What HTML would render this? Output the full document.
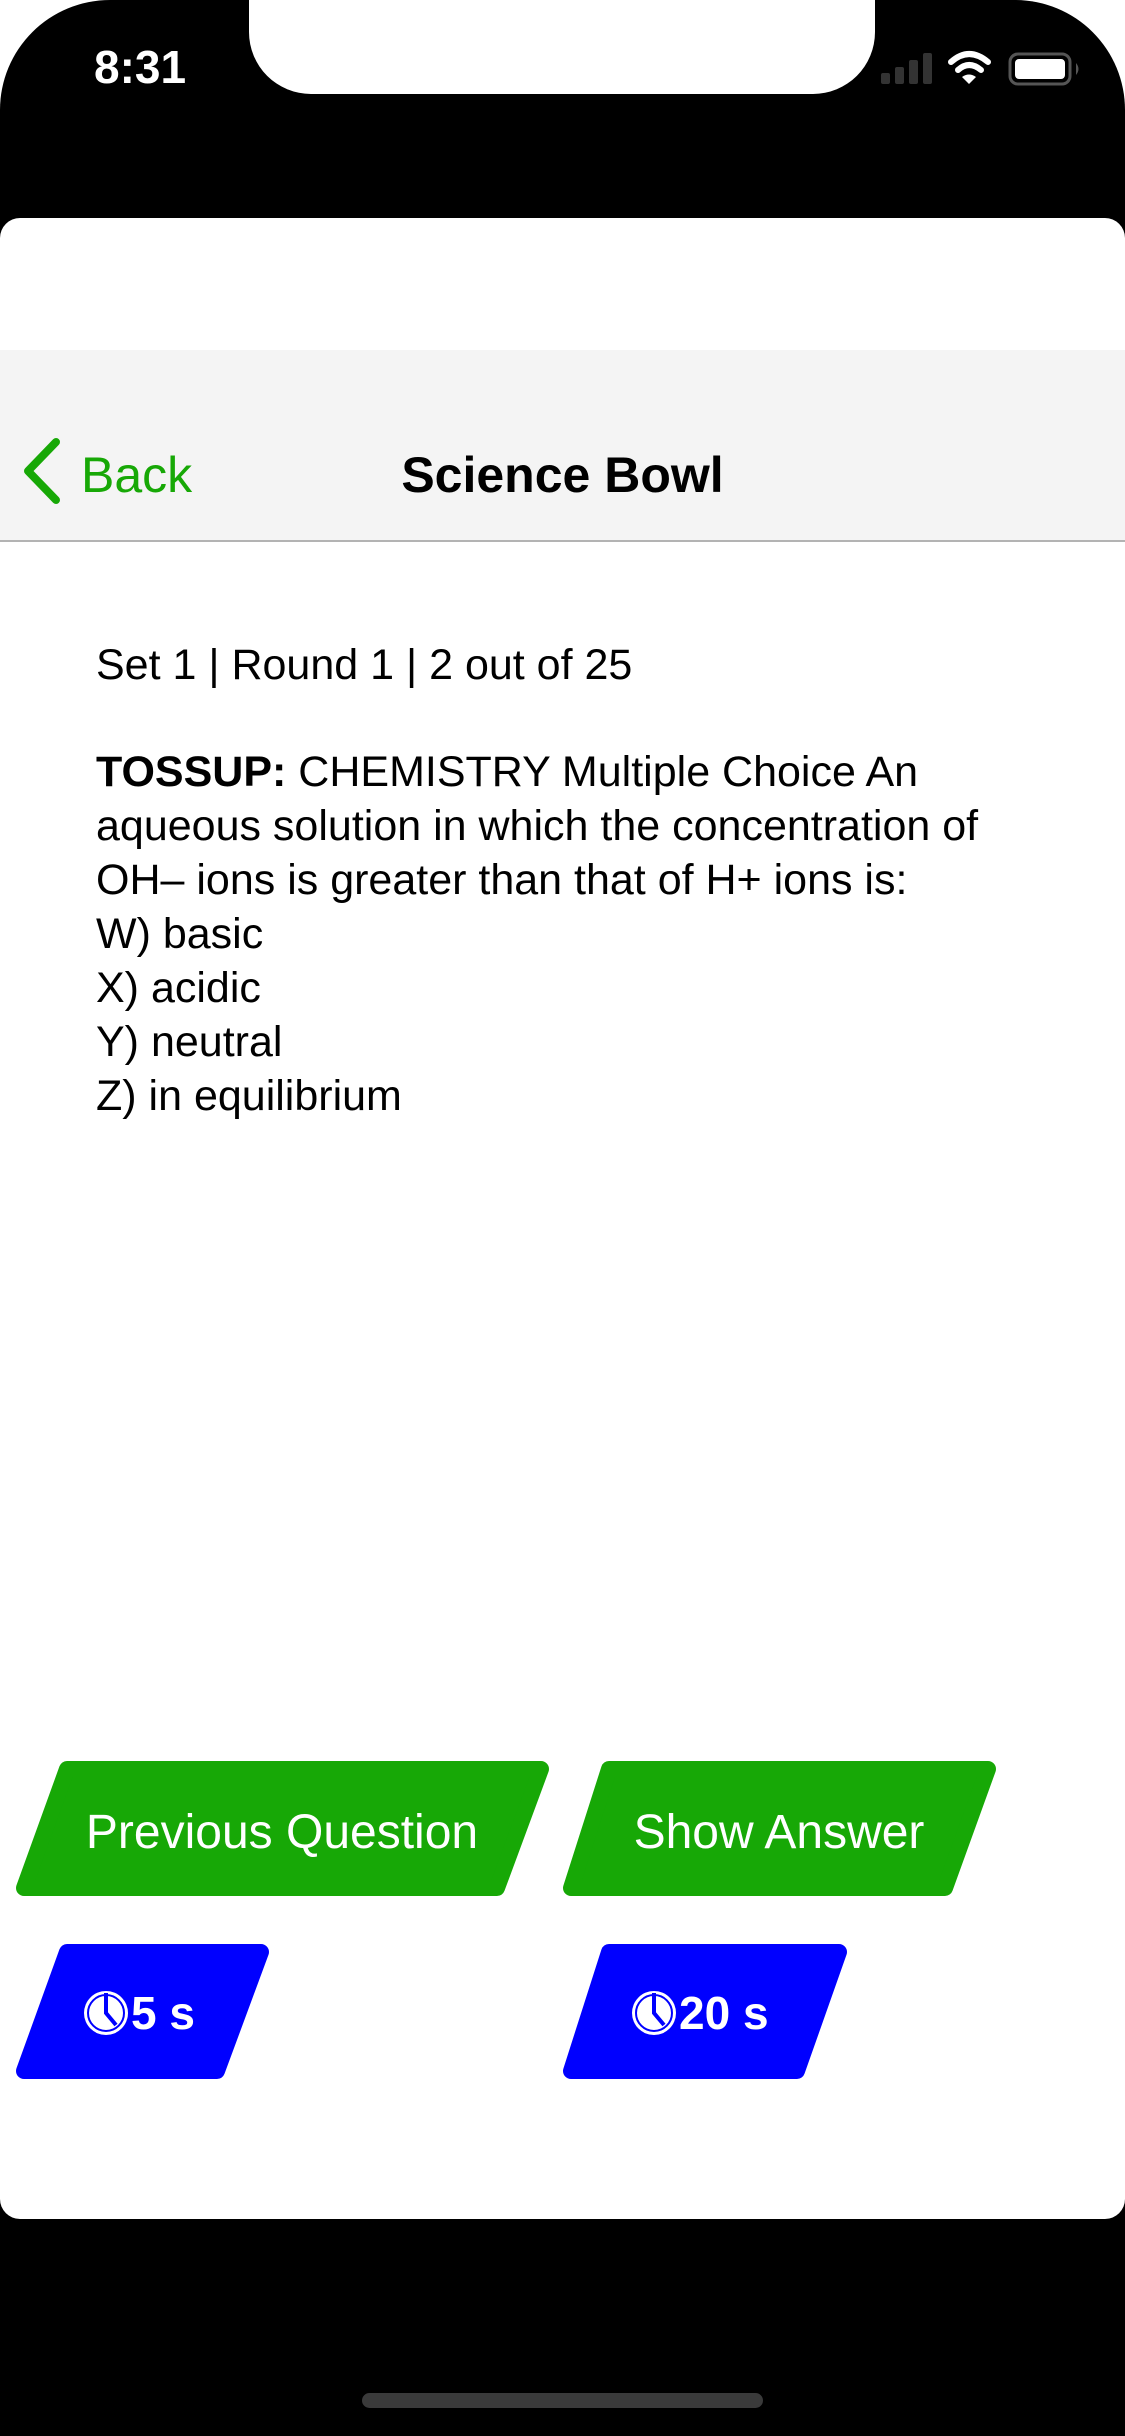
<!DOCTYPE html>
<html><head><meta charset="utf-8">
<style>
html,body{margin:0;padding:0;background:#fff;}
body{width:1125px;height:2436px;position:relative;overflow:hidden;font-family:"Liberation Sans",Arial,sans-serif;}
.phone{position:absolute;left:0;top:0;width:1125px;height:2436px;background:#000;border-radius:110px 110px 0 0;}
.notch{position:absolute;left:249px;top:0;width:626px;height:94px;background:#fff;border-radius:0 0 62px 62px;}
.card{position:absolute;left:0;top:218px;width:1125px;height:2001px;background:#fff;border-radius:20px;overflow:hidden;}
.nav{position:absolute;left:0;top:132px;width:1125px;height:190px;background:#f4f4f4;border-bottom:2px solid #b3b3b3;}
.time{position:absolute;left:94px;top:40px;color:#fff;font-size:46px;font-weight:600;}
.title{position:absolute;left:0;width:1125px;text-align:center;top:96px;font-size:50px;font-weight:bold;color:#000;}
.back{position:absolute;left:81px;top:96px;font-size:50px;color:#17a806;}
.txt{position:absolute;left:96px;font-size:43px;line-height:54px;color:#000;}
.home{position:absolute;left:362px;top:2393px;width:401px;height:15px;border-radius:8px;background:#3a3a3a;}
</style></head><body>
<div class="phone"></div>
<div class="notch"></div>
<div class="time">8:31</div>
<svg style="position:absolute;left:0;top:0" width="1125" height="120">
 <g fill="#333"><rect x="881" y="73" width="9" height="11" rx="2"/><rect x="895" y="67" width="9" height="17" rx="2"/><rect x="909" y="60" width="9" height="24" rx="2"/><rect x="923" y="53" width="9" height="31" rx="2"/></g>
 <g fill="none" stroke="#fff" stroke-width="6" stroke-linecap="round"><path d="M951 62 Q969 46 988 62"/><path d="M958 70 Q969 60 981 70"/></g>
 <path d="M962 77 L969 84 L976 77 Q969 72 962 77Z" fill="#fff"/>
 <rect x="1010" y="54" width="60" height="30" rx="8" fill="none" stroke="#555" stroke-width="3"/>
 <rect x="1015" y="59" width="50" height="20" rx="4" fill="#fff"/>
 <path d="M1076 63 Q1081 69 1076 75Z" fill="#555"/>
</svg>
<div class="card">
 <div class="nav">
  <svg style="position:absolute;left:18px;top:86px" width="50" height="70"><path d="M38 6 L10 35 L38 64" fill="none" stroke="#17a806" stroke-width="8" stroke-linecap="round" stroke-linejoin="round"/></svg>
  <div class="back">Back</div>
  <div class="title">Science Bowl</div>
 </div>
 <div class="txt" style="top:420px">Set 1 | Round 1 | 2 out of 25</div>
 <div class="txt" style="top:527px"><b>TOSSUP:</b> CHEMISTRY Multiple Choice An<br>aqueous solution in which the concentration of<br>OH– ions is greater than that of H+ ions is:<br>W) basic<br>X) acidic<br>Y) neutral<br>Z) in equilibrium</div>
</div>
<svg style="position:absolute;left:0;top:0" width="1125" height="2436">
 <g stroke-linejoin="round" stroke-width="16">
  <polygon points="67,1769 541,1769 497,1888 24,1888" fill="#17a806" stroke="#17a806"/>
  <polygon points="609,1769 988,1769 945,1888 571,1888" fill="#17a806" stroke="#17a806"/>
  <polygon points="67,1952 261,1952 217,2071 24,2071" fill="#0000ff" stroke="#0000ff"/>
  <polygon points="609,1952 839,1952 797,2071 571,2071" fill="#0000ff" stroke="#0000ff"/>
 </g>
 <g font-family="Liberation Sans, Arial, sans-serif" fill="#fff">
  <text x="282" y="1848" font-size="48" text-anchor="middle">Previous Question</text>
  <text x="779" y="1848" font-size="48" text-anchor="middle">Show Answer</text>
  <text x="131" y="2029" font-size="46" font-weight="bold">5 s</text>
  <text x="679" y="2029" font-size="46" font-weight="bold">20 s</text>
 </g>
 <g>
  <circle cx="106" cy="2013" r="22" fill="#fff"/><circle cx="106" cy="2013" r="18" fill="none" stroke="#0000ff" stroke-width="2"/><path d="M106 1993 L106 2013 L116 2025" fill="none" stroke="#0000ff" stroke-width="4"/>
  <circle cx="654" cy="2013" r="22" fill="#fff"/><circle cx="654" cy="2013" r="18" fill="none" stroke="#0000ff" stroke-width="2"/><path d="M654 1993 L654 2013 L664 2025" fill="none" stroke="#0000ff" stroke-width="4"/>
 </g>
</svg>
<div class="home"></div>
</body></html>
